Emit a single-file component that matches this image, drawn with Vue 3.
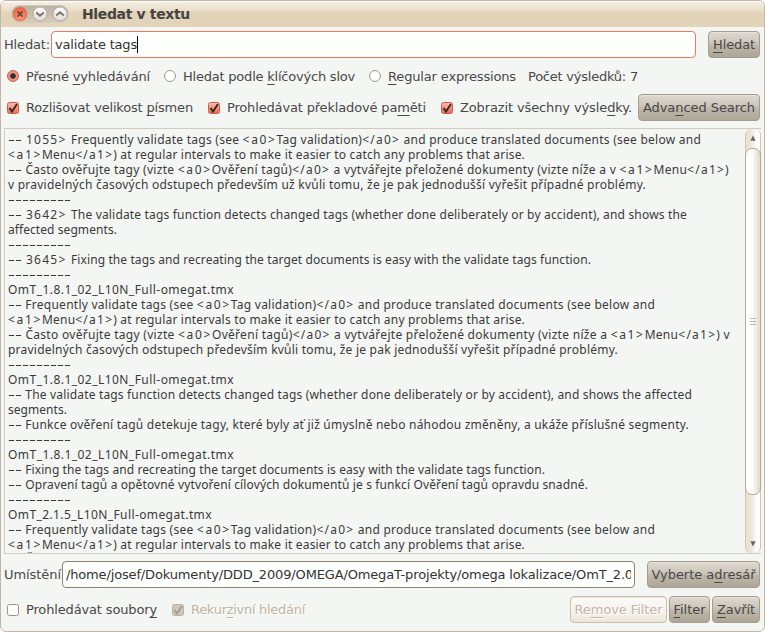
<script setup>
import { ref, onMounted } from 'vue'

const root = ref(null)
const sep = ['---------', 63]
const file = ['OmT_1.8.1_02_L10N_Full-omegat.tmx', 226]
const source = [
  ['-- 1055> Frequently validate tags (see <a0>Tag validation)</a0> and produce translated documents (see below and', 693],
  ['<a1>Menu</a1>) at regular intervals to make it easier to catch any problems that arise.', 517],
  ['-- Často ověřujte tagy (vizte <a0>Ověření tagů)</a0> a vytvářejte přeložené dokumenty (vizte níže a v <a1>Menu</a1>)', 721],
  ['v pravidelných časových odstupech především už kvůli tomu, že je pak jednodušší vyřešit případné problémy.', 638],
  sep,
  ['-- 3642> The validate tags function detects changed tags (whether done deliberately or by accident), and shows the', 679],
  ['affected segments.', 109],
  sep,
  ['-- 3645> Fixing the tags and recreating the target documents is easy with the validate tags function.', 583],
  sep,
  file,
  ['-- Frequently validate tags (see <a0>Tag validation)</a0> and produce translated documents (see below and', 647],
  ['<a1>Menu</a1>) at regular intervals to make it easier to catch any problems that arise.', 517],
  ['-- Často ověřujte tagy (vizte <a0>Ověření tagů)</a0> a vytvářejte přeložené dokumenty (vizte níže a <a1>Menu</a1>) v', 722],
  ['pravidelných časových odstupech především kvůli tomu, že je pak jednodušší vyřešit případné problémy.', 610],
  sep,
  file,
  ['-- The validate tags function detects changed tags (whether done deliberately or by accident), and shows the affected', 684],
  ['segments.', 59],
  ['-- Funkce ověření tagů detekuje tagy, které byly ať již úmyslně nebo náhodou změněny, a ukáže příslušné segmenty.', 681],
  sep,
  file,
  ['-- Fixing the tags and recreating the target documents is easy with the validate tags function.', 537],
  ['-- Opravení tagů a opětovné vytvoření cílových dokumentů je s funkcí Ověření tagů opravdu snadné.', 580],
  sep,
  ['OmT_2.1.5_L10N_Full-omegat.tmx', 204],
  ['-- Frequently validate tags (see <a0>Tag validation)</a0> and produce translated documents (see below and', 647],
  ['<a1>Menu</a1>) at regular intervals to make it easier to catch any problems that arise.', 517],
  ['-- Často ověřujte tagy (vizte <a0>Ověření tagů)</a0> a vytvářejte přeložené dokumenty (vizte níže a <a1>Menu</a1>) v', 722],
]

// Splits a line into dash runs, segment numbers, tags and plain text.
function tokens(text) {
  return text.split(/(^-+|\d{4}> |<\/?a\d>)/).filter(Boolean).map((t) => {
    if (/^--+$/.test(t)) return { t, kind: 'dash', w: t.length * 7 }
    if (/^\d{4}> $/.test(t)) return { t, kind: 'num', w: 45 }
    if (/^<a/.test(t)) return { t, kind: 'tag', w: 34 }
    if (/^<\//.test(t)) return { t, kind: 'tag', w: 38 }
    if (t === ' ') return { t, kind: 'num', w: 4 }
    return { t, kind: 'plain' }
  })
}
const lines = source.map(([text, width]) => ({ width, parts: tokens(text) }))

const widthOf = (el) => el.getBoundingClientRect().width
const lengthOf = (el) => [...el.textContent].length

function fit(el, width) {
  el.style.letterSpacing = (width - widthOf(el)) / lengthOf(el) + 'px'
}

onMounted(() => {
  for (const el of root.value.querySelectorAll('[data-w]')) {
    const width = Number(el.dataset.w)
    if (el.classList.contains('dash')) {
      el.style.transform = `scaleX(${width / widthOf(el)})`
      el.style.width = width + 'px'
    } else fit(el, width)
  }
  root.value.querySelectorAll('.line').forEach((row, i) => {
    const plain = [...row.querySelectorAll('.plain')]
    const fixed = lines[i].parts.reduce((sum, p) => sum + (p.w || 0), 0)
    const natural = plain.reduce((sum, el) => sum + widthOf(el), 0)
    const count = plain.reduce((sum, el) => sum + lengthOf(el), 0)
    const spacing = (lines[i].width - fixed - natural) / count
    for (const el of plain) el.style.letterSpacing = spacing + 'px'
  })
})
</script>

<template>
  <div ref="root" class="window">
    <header class="titlebar">
      <div class="controls">
        <svg width="58" height="18" viewBox="0 0 58 18">
          <defs>
            <linearGradient id="light" x1="0" y1="0" x2="0" y2="1"><stop offset="0" stop-color="#fff" /><stop offset="1" stop-color="#dedad2" /></linearGradient>
            <linearGradient id="tray" x1="0" y1="0" x2="0" y2="1"><stop offset="0" stop-color="#b9afa2" /><stop offset="1" stop-color="#d8ccba" /></linearGradient>
            <radialGradient id="red" cx=".5" cy=".7" r=".6"><stop offset="0" stop-color="#ff9c78" /><stop offset="1" stop-color="#ec6640" /></radialGradient>
          </defs>
          <rect x=".5" y=".5" width="57" height="17" rx="8" fill="url(#tray)" stroke="#d6cbba" />
          <circle cx="9" cy="9" r="7" fill="url(#red)" stroke="#c4806c" stroke-width=".8" />
          <circle cx="29" cy="9" r="7" fill="url(#light)" stroke="#a9a093" stroke-width=".8" />
          <circle cx="49" cy="9" r="7" fill="url(#light)" stroke="#a9a093" stroke-width=".8" />
          <path d="M6.5 6.5l5 5m0-5l-5 5" stroke="#7a4636" stroke-width="1.8" />
          <path d="M25.2 7.5l3.8 3.3 3.8-3.3M45.2 10.5l3.8-3.3 3.8 3.3" fill="none" stroke="#77726b" stroke-width="1.8" />
        </svg>
      </div>
      <h1><span data-w="108">Hledat v textu</span></h1>
    </header>

    <div class="row search">
      <label><span data-w="46">Hledat:</span></label>
      <div class="field focus"><span data-w="82">validate tags</span><i class="caret"></i></div>
      <button class="btn b-find"><span data-w="42"><u>H</u>ledat</span></button>
    </div>

    <div class="row modes">
      <span class="radio on"></span><span class="c1" data-w="124">Přesné <u>v</u>yhledávání</span>
      <span class="radio r2"></span><span class="c1" data-w="172">Hledat podle <u>k</u>líčových slov</span>
      <span class="radio r3"></span><span class="c1" data-w="128"><u>R</u>egular expressions</span>
      <span class="count" data-w="110">Počet výsledků: 7</span>
    </div>

    <div class="row opts">
      <span class="check on"><svg viewBox="0 0 12 12"><path d="M2.5 6l2.5 3.5L10 2" /></svg></span><span class="c1" data-w="167">Rozlišovat velikost <u>p</u>ísmen</span>
      <span class="check on k2"><svg viewBox="0 0 12 12"><path d="M2.5 6l2.5 3.5L10 2" /></svg></span><span class="c1" data-w="199">Prohledávat překladové pa<u>m</u>ěti</span>
      <span class="check on k3"><svg viewBox="0 0 12 12"><path d="M2.5 6l2.5 3.5L10 2" /></svg></span><span class="c1" data-w="172">Zobrazit všechny výsle<u>d</u>ky.</span>
      <button class="btn b-adv"><span data-w="112">Adva<u>n</u>ced Search</span></button>
    </div>

    <section class="results">
      <div class="text">
        <div v-for="(line, i) in lines" :key="i" class="line"><span v-for="(p, j) in line.parts" :key="j" :class="p.kind" :data-w="p.w">{{ p.t }}</span></div>
      </div>
      <div class="scroll">
        <svg class="arrow" viewBox="0 0 16 19"><path d="M5 12L8 6l3 6z" /></svg>
        <div class="thumb"><i></i><i></i><i></i></div>
        <svg class="arrow" viewBox="0 0 16 19"><path d="M5 7l3 6 3-6z" /></svg>
      </div>
    </section>

    <div class="row location">
      <label><span data-w="57">Umístění</span></label>
      <div class="field path"><div class="clip"><span data-w="567">/home/josef/Dokumenty/DDD_2009/OMEGA/OmegaT-projekty/omega lokalizace/OmT_2.0</span></div></div>
      <button class="btn b-dir"><span data-w="104">Vyberte a<u>d</u>resář</span></button>
    </div>

    <div class="row bottom">
      <span class="check"></span><span class="c1" data-w="131">Prohledávat soubor<u>y</u></span>
      <span class="check off"><svg viewBox="0 0 12 12"><path d="M2.5 6l2.5 3.5L10 2" /></svg></span><span class="c1 dim" data-w="114">Rekur<u>z</u>ivní hledání</span>
      <div class="actions">
        <button class="btn disabled b-rem"><span data-w="88">Re<u>m</u>ove Filter</span></button>
        <button class="btn b-fil"><span data-w="32"><u>F</u>ilter</span></button>
        <button class="btn b-close"><span data-w="38"><u>Z</u>avřít</span></button>
      </div>
    </div>
  </div>
</template>

<style>
body { background: #fff; overflow: hidden; }
</style>

<style scoped>
* { box-sizing: border-box; }
.window { width: 765px; height: 632px; border: 1px solid #c0b5a7; border-radius: 6px; background: #f4f6f3; overflow: hidden; font: 13px/16px "DejaVu Sans", sans-serif; color: #484848; white-space: pre; display: flex; flex-direction: column; }
.titlebar { flex: none; height: 26px; display: flex; align-items: center; background: linear-gradient(#fff 0, #f2ebdd 2px, #eadfca 9px, #e2d3b9 12px, #e2d3b9 100%); }
.controls { margin: 0 0 1px 10px; height: 18px; }
.controls svg { display: block; }
h1 { font-size: 14px; font-weight: bold; line-height: 18px; margin: 0 0 0 13px; color: #444; }
.row { display: flex; align-items: center; flex: none; }
u { text-decoration: underline; text-decoration-thickness: 1px; text-underline-offset: 3px; text-decoration-skip-ink: none; }
.search { height: 27px; margin-top: 4px; padding-left: 3px; }
label { width: 47px; }
.field { height: 27px; background: #fdfffc; border: 1px solid #8f8271; border-radius: 4px; padding-left: 3px; display: flex; align-items: center; color: #333; overflow: hidden; }
.field span { flex: none; }
.focus { border-color: #ee7b61; width: 645px; }
.caret { width: 1px; height: 17px; background: #000; }
.btn { font: inherit; color: inherit; height: 27px; padding: 0; border: 1px solid #a69c8d; border-radius: 4px; background: linear-gradient(#dedad2, #cbc4b8 45%, #bfb7aa 55%, #aba696); box-shadow: inset 0 1px #e8e4dc; display: flex; align-items: center; justify-content: center; flex: none; white-space: pre; }
.b-find { width: 52px; margin-left: 12px; }
.modes { height: 20px; margin-top: 8px; padding-left: 6px; }
.modes .c1, .modes .count { position: relative; top: 1px; }
.radio { flex: none; width: 12px; height: 12px; border: 1px solid #a49c8c; border-radius: 50%; background: #fff; }
.radio.on { border-color: #cf634a; background: radial-gradient(circle, #333 0 2.4px, #f79b87 3.2px, #f0694b); }
.c1 { margin-left: 7px; flex: none; }
.r2 { margin-left: 14px; }
.r3 { margin-left: 14px; }
.count { margin-left: 12px; flex: none; }
.opts { height: 27px; margin-top: 8px; padding-left: 6px; }
.check { flex: none; width: 12px; height: 12px; border: 1px solid #9c9282; border-radius: 2.5px; background: #fff; }
.check.on { border-color: #cb5e48; background: linear-gradient(#fbbcac, #f3694f); }
.check svg { display: block; width: 12px; height: 12px; margin: -1px; }
.check path { fill: none; stroke: #2f2927; stroke-width: 1.9; }
.check.off { border-color: #b8afa2; background: #cec7bb; margin-left: 15px; }
.check.off path { stroke: #a39b8f; }
.k2 { margin-left: 15px; }
.k3 { margin-left: 15px; }
.b-adv { width: 122px; margin-left: 6px; }
.results { flex: none; height: 426px; width: 757px; margin: 7px 0 0 3px; border: 1px solid #d3cbc2; border-right: 0; display: flex; overflow: hidden; }
.text { width: 740px; padding: 3px 0 0 3px; height: 424px; overflow: hidden; font: 12px/15px "Noto Sans", "DejaVu Sans", sans-serif; color: #3a3a3a; }
.line { height: 15px; }
.line span { display: inline-block; vertical-align: top; }
.line .dash { transform-origin: 0 50%; }
.scroll { width: 16px; height: 424px; flex: none; display: flex; flex-direction: column; border: 1px solid #cfc4b4; border-width: 0 1px; border-radius: 6px; background: linear-gradient(90deg, #ece2d3 0 4px, #f1eee8 7px, #fff 11px); }
.arrow { height: 19px; width: 14px; flex: none; fill: #6b665e; }
.thumb { flex: none; width: 16px; margin-left: -1px; height: 347px; border: 1px solid #b7a894; border-radius: 7px; background: linear-gradient(90deg, #fff 0 7px, #f0efea 8px 10px, #e9dfcf 12px); display: flex; flex-direction: column; gap: 2px; align-items: center; justify-content: center; }
.thumb i { width: 6px; height: 1px; background: #bbb5aa; }
.scroll .arrow:last-child { margin-top: auto; }
.location { height: 27px; margin-top: 7px; padding-left: 3px; }
.location label { width: 58px; }
.path { width: 573px; }
.clip { width: 565px; overflow: hidden; display: flex; }
.b-dir { width: 113px; margin-left: 12px; }
.bottom { height: 27px; margin-top: 8px; padding-left: 6px; }
.dim { color: #c0b3a4; text-shadow: 1px 1px #fff; }
.actions { display: flex; gap: 2px; margin-left: auto; padding-right: 4px; }
.b-rem { width: 97px; }
.b-fil { width: 41px; }
.b-close { width: 48px; }
.disabled { color: #c3b6a7; text-shadow: 1px 1px #fff; border-color: #c9beb0; background: linear-gradient(#fbfaf7, #f5f2ec 60%, #ede5d8); }
</style>
